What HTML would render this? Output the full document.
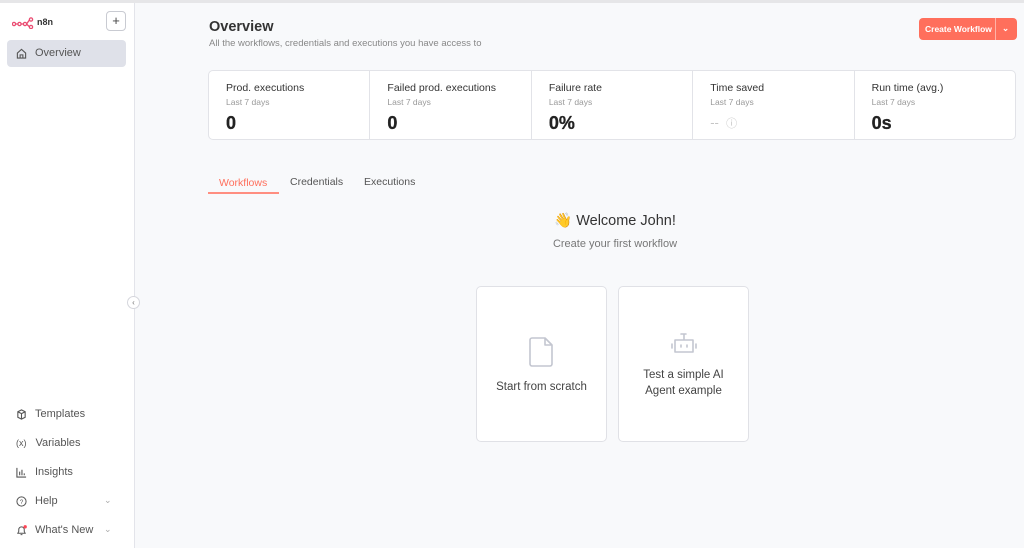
<!DOCTYPE html>
<html><head><meta charset="utf-8"><style>
*{box-sizing:border-box;margin:0;padding:0}
body{width:1024px;height:548px;overflow:hidden;font-family:"Liberation Sans",sans-serif;background:#f8f9fb;position:relative;color:#222}
.top{position:absolute;left:0;top:0;width:1024px;height:3px;background:#e6e6e8}
.side{position:absolute;left:0;top:3px;width:135px;height:545px;background:#fff;border-right:1px solid #e3e4ea}
.abs{position:absolute}
.nav{position:absolute;left:16px;font-size:11px;color:#555;display:flex;align-items:center}
.nav svg{margin-right:8px}
.card{position:absolute;top:70px;left:208px;width:808px;height:70px;background:#fff;border:1px solid #e2e3e8;border-radius:5px;display:flex}
.cell{flex:1;border-right:1px solid #e2e3e8;padding:11px 0 0 17px}
.cell:last-child{border-right:none}
.t{font-size:10.5px;color:#333}
.s{font-size:8.5px;color:#999;margin-top:3px}
.v{font-size:18px;color:#222;margin-top:6px;font-weight:600;-webkit-text-stroke:0.3px #222}
.box{position:absolute;top:286px;width:131px;height:156px;background:#fff;border:1px solid #e0e1e6;border-radius:5px;text-align:center;font-size:11.5px;color:#444}
</style></head><body>
<div class="top"></div>
<div class="side">
 <svg class="abs" style="left:12px;top:14px" width="22" height="12" viewBox="0 0 22 12"><g fill="none" stroke="#ea4b71" stroke-width="1.3"><circle cx="2" cy="7" r="1.6"/><circle cx="7.5" cy="7" r="1.6"/><circle cx="13" cy="7" r="1.6"/><circle cx="19" cy="2.5" r="1.6"/><circle cx="19" cy="10" r="1.6"/><path d="M3.6 7H6M9.1 7h2.3M14.6 7l2.8-4M14.6 7l2.8 2.8"/></g></svg>
 <div class="abs" style="left:37px;top:14px;font-size:9px;font-weight:bold;color:#333">n8n</div>
 <div class="abs" style="left:106px;top:8px;width:20px;height:20px;border:1px solid #c9cbd2;border-radius:4px;text-align:center;font-size:13px;line-height:18px;color:#444">+</div>
 <div class="abs" style="left:7px;top:37px;width:119px;height:27px;background:#dfe1e9;border-radius:4px"></div>
 <div class="nav" style="top:44px;left:16px"><svg width="11" height="11" viewBox="0 0 12 12"><path d="M1.5 5.5L6 1.5l4.5 4V11h-9z M4.5 11V7.5h3V11" fill="none" stroke="#555" stroke-width="1.2"/></svg>Overview</div>
 <div class="nav" style="top:405px"><svg width="11" height="11" viewBox="0 0 12 12"><path d="M2 3l4-2 4 2v6l-4 2-4-2z M2 3l4 2 4-2M6 5v6" fill="none" stroke="#555" stroke-width="1.2"/></svg>Templates</div>
 <div class="nav" style="top:434px"><span style="font-size:9px;margin-right:9px">(x)</span>Variables</div>
 <div class="nav" style="top:463px"><svg width="11" height="11" viewBox="0 0 12 12"><path d="M1 1v10h10M4 9V5M6.5 9V3M9 9V7" fill="none" stroke="#555" stroke-width="1.2"/></svg>Insights</div>
 <div class="nav" style="top:492px"><svg width="11" height="11" viewBox="0 0 12 12"><circle cx="6" cy="6" r="5" fill="none" stroke="#555" stroke-width="1.1"/><text x="6" y="8.5" font-size="7" text-anchor="middle" fill="#555" font-family="Liberation Sans">?</text></svg>Help</div>
 <div class="nav" style="top:521px"><svg width="11" height="11" viewBox="0 0 12 12"><path d="M2 9h8l-1-2V5a3 3 0 0 0-6 0v2z M5 10.5h2" fill="none" stroke="#555" stroke-width="1.1"/><circle cx="10" cy="2" r="1.8" fill="#f45"/></svg>What's New</div>
 <div class="abs" style="left:104px;top:492px;font-size:9px;color:#aaa">⌄</div>
 <div class="abs" style="left:104px;top:521px;font-size:9px;color:#aaa">⌄</div>
</div>
<div class="abs" style="left:127px;top:296px;width:13px;height:13px;border:1px solid #d5d6dc;border-radius:50%;background:#fff;font-size:8px;text-align:center;line-height:11px;color:#777">‹</div>
<div class="abs" style="left:209px;top:19px;font-size:14.5px;font-weight:bold;color:#333">Overview</div>
<div class="abs" style="left:209px;top:38px;font-size:9.5px;color:#888">All the workflows, credentials and executions you have access to</div>
<div class="abs" style="left:919px;top:18px;width:98px;height:22px;background:#ff6f5c;border-radius:4px;color:#fff;font-size:8.5px;font-weight:bold;line-height:22px;padding-left:6px">Create Workflow<span style="position:absolute;left:76px;top:0;width:1px;height:22px;background:#ffb3a8"></span><span style="position:absolute;left:83px;top:-1px">⌄</span></div>
<div class="card">
 <div class="cell"><div class="t">Prod. executions</div><div class="s">Last 7 days</div><div class="v">0</div></div>
 <div class="cell"><div class="t">Failed prod. executions</div><div class="s">Last 7 days</div><div class="v">0</div></div>
 <div class="cell"><div class="t">Failure rate</div><div class="s">Last 7 days</div><div class="v">0%</div></div>
 <div class="cell"><div class="t">Time saved</div><div class="s">Last 7 days</div><div class="v" style="font-size:13px;color:#c5c5c5;margin-top:8px;-webkit-text-stroke:0;font-weight:normal">-- &nbsp;<span style="font-size:11px">ⓘ</span></div></div>
 <div class="cell"><div class="t">Run time (avg.)</div><div class="s">Last 7 days</div><div class="v">0s</div></div>
</div>
<div class="abs" style="left:219px;top:177px;font-size:10.5px;color:#ff6f5c">Workflows</div>
<div class="abs" style="left:208px;top:192px;width:71px;height:1.5px;background:#ff8e80"></div>
<div class="abs" style="left:290px;top:176px;font-size:10.5px;color:#555">Credentials</div>
<div class="abs" style="left:364px;top:176px;font-size:10.5px;color:#555">Executions</div>
<div class="abs" style="left:470px;top:212px;width:290px;text-align:center;font-size:14.5px;color:#333">👋 Welcome John!</div>
<div class="abs" style="left:470px;top:238px;width:290px;text-align:center;font-size:11px;color:#777">Create your first workflow</div>
<div class="box" style="left:476px"><svg style="margin-top:49px" width="26" height="32" viewBox="0 0 26 32"><path d="M3 2h13l7 7v19a2 2 0 0 1-2 2H3a2 2 0 0 1-2-2V4a2 2 0 0 1 2-2z M16 2v7h7" fill="none" stroke="#c3c6d0" stroke-width="1.6" stroke-linejoin="round"/></svg><div style="margin-top:10px">Start from scratch</div></div>
<div class="box" style="left:618px"><svg style="margin-top:43px" width="30" height="26" viewBox="0 0 30 26"><path d="M6 10h18v12H6z M15 4v6 M12 4h5 M3 14v4 M27 14v4 M12 15v2 M18 15v2" fill="none" stroke="#c3c6d0" stroke-width="1.6" stroke-linejoin="round" stroke-linecap="round"/></svg><div style="margin-top:8px;line-height:16px">Test a simple AI<br>Agent example</div></div>
</body></html>
